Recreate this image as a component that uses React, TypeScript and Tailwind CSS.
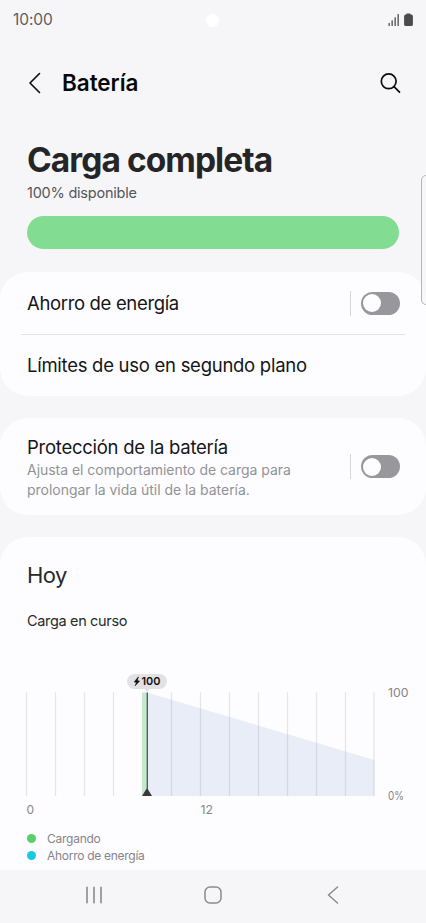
import type { ReactNode } from "react";

const gridLines = [26.5, 55.5, 84.5, 113.5, 171.5, 200.5, 229.5, 258.5, 287.5, 316.5, 345.5, 374];

const legend = [
  { label: "Cargando", color: "bg-[#58cf6c]", text: "tracking-[-0.25px]" },
  { label: "Ahorro de energía", color: "bg-[#1bc8e2]", text: "tracking-[-0.28px]" },
];

function StatusBar() {
  return (
    <div className="flex h-10 items-center justify-between pr-[13px] pl-3">
      <span className="w-[60px] pl-px text-[15.5px] leading-5 tracking-[-0.1px] text-[#5c5c5e]">10:00</span>
      <span className="size-[13px] rounded-full bg-white" />
      <div className="flex w-[60px] justify-end">
        <svg width="26" height="14" viewBox="0 0 26 14" fill="#4b4b4b">
          <rect x="1.500" y="10" width="1.3" height="3" rx=".5" />
          <rect x="4.500" y="7.2" width="1.3" height="5.8" rx=".5" />
          <rect x="7.500" y="4.2" width="1.3" height="8.8" rx=".5" />
          <rect x="10.500" y="1" width="1.3" height="12" rx=".5" />
          <path d="M19.9 .5h3q.6 0 .6.6v.5h.8q1.6 0 1.6 1.6v8.2q0 1.6-1.6 1.6h-5.600q-1.6 0-1.6-1.6V3.200q0-1.600 1.600-1.600h.6v-.5q0-.6.6-.6z" />
        </svg>
      </div>
    </div>
  );
}

function Header() {
  return (
    <header className="flex h-[87px] items-center pr-[25px] pb-px pl-7">
      <svg width="14" height="22" viewBox="0 0 14 22" fill="none" stroke="#0c0c0c" strokeWidth="1.6" strokeLinecap="round" strokeLinejoin="round">
        <path d="M11.500 1.500 2 11l9.500 9.500" />
      </svg>
      <h1 className="ml-5 flex-1 text-[22.5px] leading-7 font-semibold tracking-[-0.05px] text-[#080808]">Batería</h1>
      <svg width="22" height="22" viewBox="0 0 22 22" fill="none" stroke="#0c0c0c" strokeWidth="1.7" strokeLinecap="round">
        <circle cx="9.700" cy="9.300" r="7.400" />
        <path d="m15 14.600 5.500 5.500" />
      </svg>
    </header>
  );
}

function Toggle() {
  return (
    <div className="flex items-center gap-[10px]">
      <span className="h-[25px] w-px bg-[#d5d5d8]" />
      <span className="flex h-[23px] w-[39px] items-center rounded-full bg-[#98979c] pl-[2px]">
        <span className="size-[18px] rounded-full bg-[#fdfdff]" />
      </span>
    </div>
  );
}

function Card({ className, children }: { className: string; children: ReactNode }) {
  return <section className={`bg-[#fdfdff] pl-[27px] pr-[26px] ${className}`}>{children}</section>;
}

function UsageChart() {
  return (
    <svg width="426" height="150" viewBox="0 670 426 150" className="-ml-[27px] block">
      <path d="M147 692.500 374.500 760v36H147z" fill="#e9edf8" />
      {gridLines.map((x) => (
        <path key={x} d={`M${x} 692.500V796`} stroke="#9a9aa8" strokeOpacity=".25" strokeWidth="1.200" />
      ))}
      <rect x="142" y="692.500" width="5" height="103.500" fill="#c5e9cd" />
      <path d="M147.300 692.500V796" stroke="#4c5552" strokeWidth="1.300" />
      <path d="M147 788.800q.6 0 1 .7l4 6.500h-10l4-6.500q.4-.7 1-.7z" fill="#39393c" />
      <rect x="127" y="674" width="40" height="15" rx="7.500" fill="#e2e2e5" />
      <path d="M144 688.500h6l-3 3z" fill="#e2e2e5" />
      <path d="m138.300 676.800-4.200 5.200 2.300.4-1.400 3.600 4.700-5-2.400-.5 1.200-3.500z" fill="#111" stroke="#111" strokeWidth=".4" />
      <text x="141.500" y="685.300" fontSize="11" fontWeight="600" textLength="19" lengthAdjust="spacingAndGlyphs" fill="#111">100</text>
      <g fontSize="12" fill="#858589">
        <text x="388" y="696.500" textLength="20.500" lengthAdjust="spacingAndGlyphs">100</text>
        <text x="388" y="800" textLength="16" lengthAdjust="spacingAndGlyphs">0%</text>
        <text x="26.500" y="813.500">0</text>
        <text x="200.500" y="813.500" textLength="12.500" lengthAdjust="spacingAndGlyphs">12</text>
      </g>
    </svg>
  );
}

function NavBar() {
  return (
    <nav className="flex h-[53px] items-center justify-between bg-[#f6f6f8] pr-[87px] pb-[3px] pl-[85px]">
      <svg width="18" height="18" viewBox="0 0 18 18" stroke="#8a8a8d" strokeWidth="1.600" strokeLinecap="round">
        <path d="M2 1.300v15.400M9 1.300v15.400M16 1.300v15.400" />
      </svg>
      <svg width="18" height="18" viewBox="0 0 18 18" fill="none" stroke="#8a8a8d" strokeWidth="1.500" className="-ml-[4px]">
        <rect x="1" y="1" width="16" height="16" rx="5" />
      </svg>
      <svg width="12" height="18" viewBox="0 0 12 18" fill="none" stroke="#8a8a8d" strokeWidth="1.500" strokeLinecap="round" strokeLinejoin="round">
        <path d="M10.500 1 1.500 9l9 8" />
      </svg>
    </nav>
  );
}

export default function App() {
  return (
    <div className="relative flex h-[923px] w-[426px] flex-col overflow-hidden bg-[#f6f6f9] font-['Inter','Liberation_Sans',sans-serif]">
      <StatusBar />
      <Header />
      <div className="h-[145px] px-[27px] pt-[13px]">
        <h2 className="text-[33.5px] leading-10 font-bold tracking-[-0.95px] whitespace-nowrap text-[#252527]">Carga completa</h2>
        <p className="mt-[3px] text-[14.5px] leading-5 tracking-[-0.22px] text-[#555558]">100% disponible</p>
        <div className="mt-[13px] h-[33px] rounded-full bg-[#82dd92]" />
      </div>

      <Card className="h-[124px] rounded-[28px]">
        <div className="flex h-[62px] items-center justify-between">
          <span className="text-[18.5px] leading-6 tracking-[-0.34px] text-[#151517]">Ahorro de energía</span>
          <Toggle />
        </div>
        <div className="-mr-[5px] -ml-[6px] h-px bg-[#e2e2e5]" />
        <div className="flex h-[61px] items-center pb-px">
          <span className="text-[18.5px] leading-6 tracking-[-0.27px] text-[#151517]">Límites de uso en segundo plano</span>
        </div>
      </Card>

      <Card className="mt-[22px] flex h-[97px] items-center justify-between rounded-[28px]">
        <div>
          <h3 className="text-[18.5px] leading-6 tracking-[-0.26px] text-[#151517]">Protección de la batería</h3>
          <p className="relative top-px text-[14px] leading-5 tracking-[-0.03px] whitespace-nowrap text-[#929296]">
            Ajusta el comportamiento de carga para
            <br />
            prolongar la vida útil de la batería.
          </p>
        </div>
        <Toggle />
      </Card>

      <Card className="mt-[22px] h-[333px] rounded-t-[28px]">
        <h2 className="pt-[24px] text-[22px] leading-7 tracking-[-0.6px] text-[#29292b]">Hoy</h2>
        <p className="mt-[22px] text-[14.5px] leading-5 tracking-[-0.34px] text-[#29292b]">Carga en curso</p>
        <div className="mt-[39px]">
          <UsageChart />
        </div>
        <ul className="mt-[10px]">
          {legend.map((item) => (
            <li key={item.label} className="flex h-[17px] items-center gap-[11px]">
              <span className={`size-[9px] rounded-full ${item.color}`} />
              <span className={`text-[12px] text-[#858589] ${item.text}`}>{item.label}</span>
            </li>
          ))}
        </ul>
      </Card>
      <NavBar />

      {/* edge panel handle */}
      <div className="absolute top-[175px] left-[421px] h-[130px] w-[12px] rounded-[5px] border border-[#b5b5b7] bg-[#f6f6f8]/80" />
    </div>
  );
}
